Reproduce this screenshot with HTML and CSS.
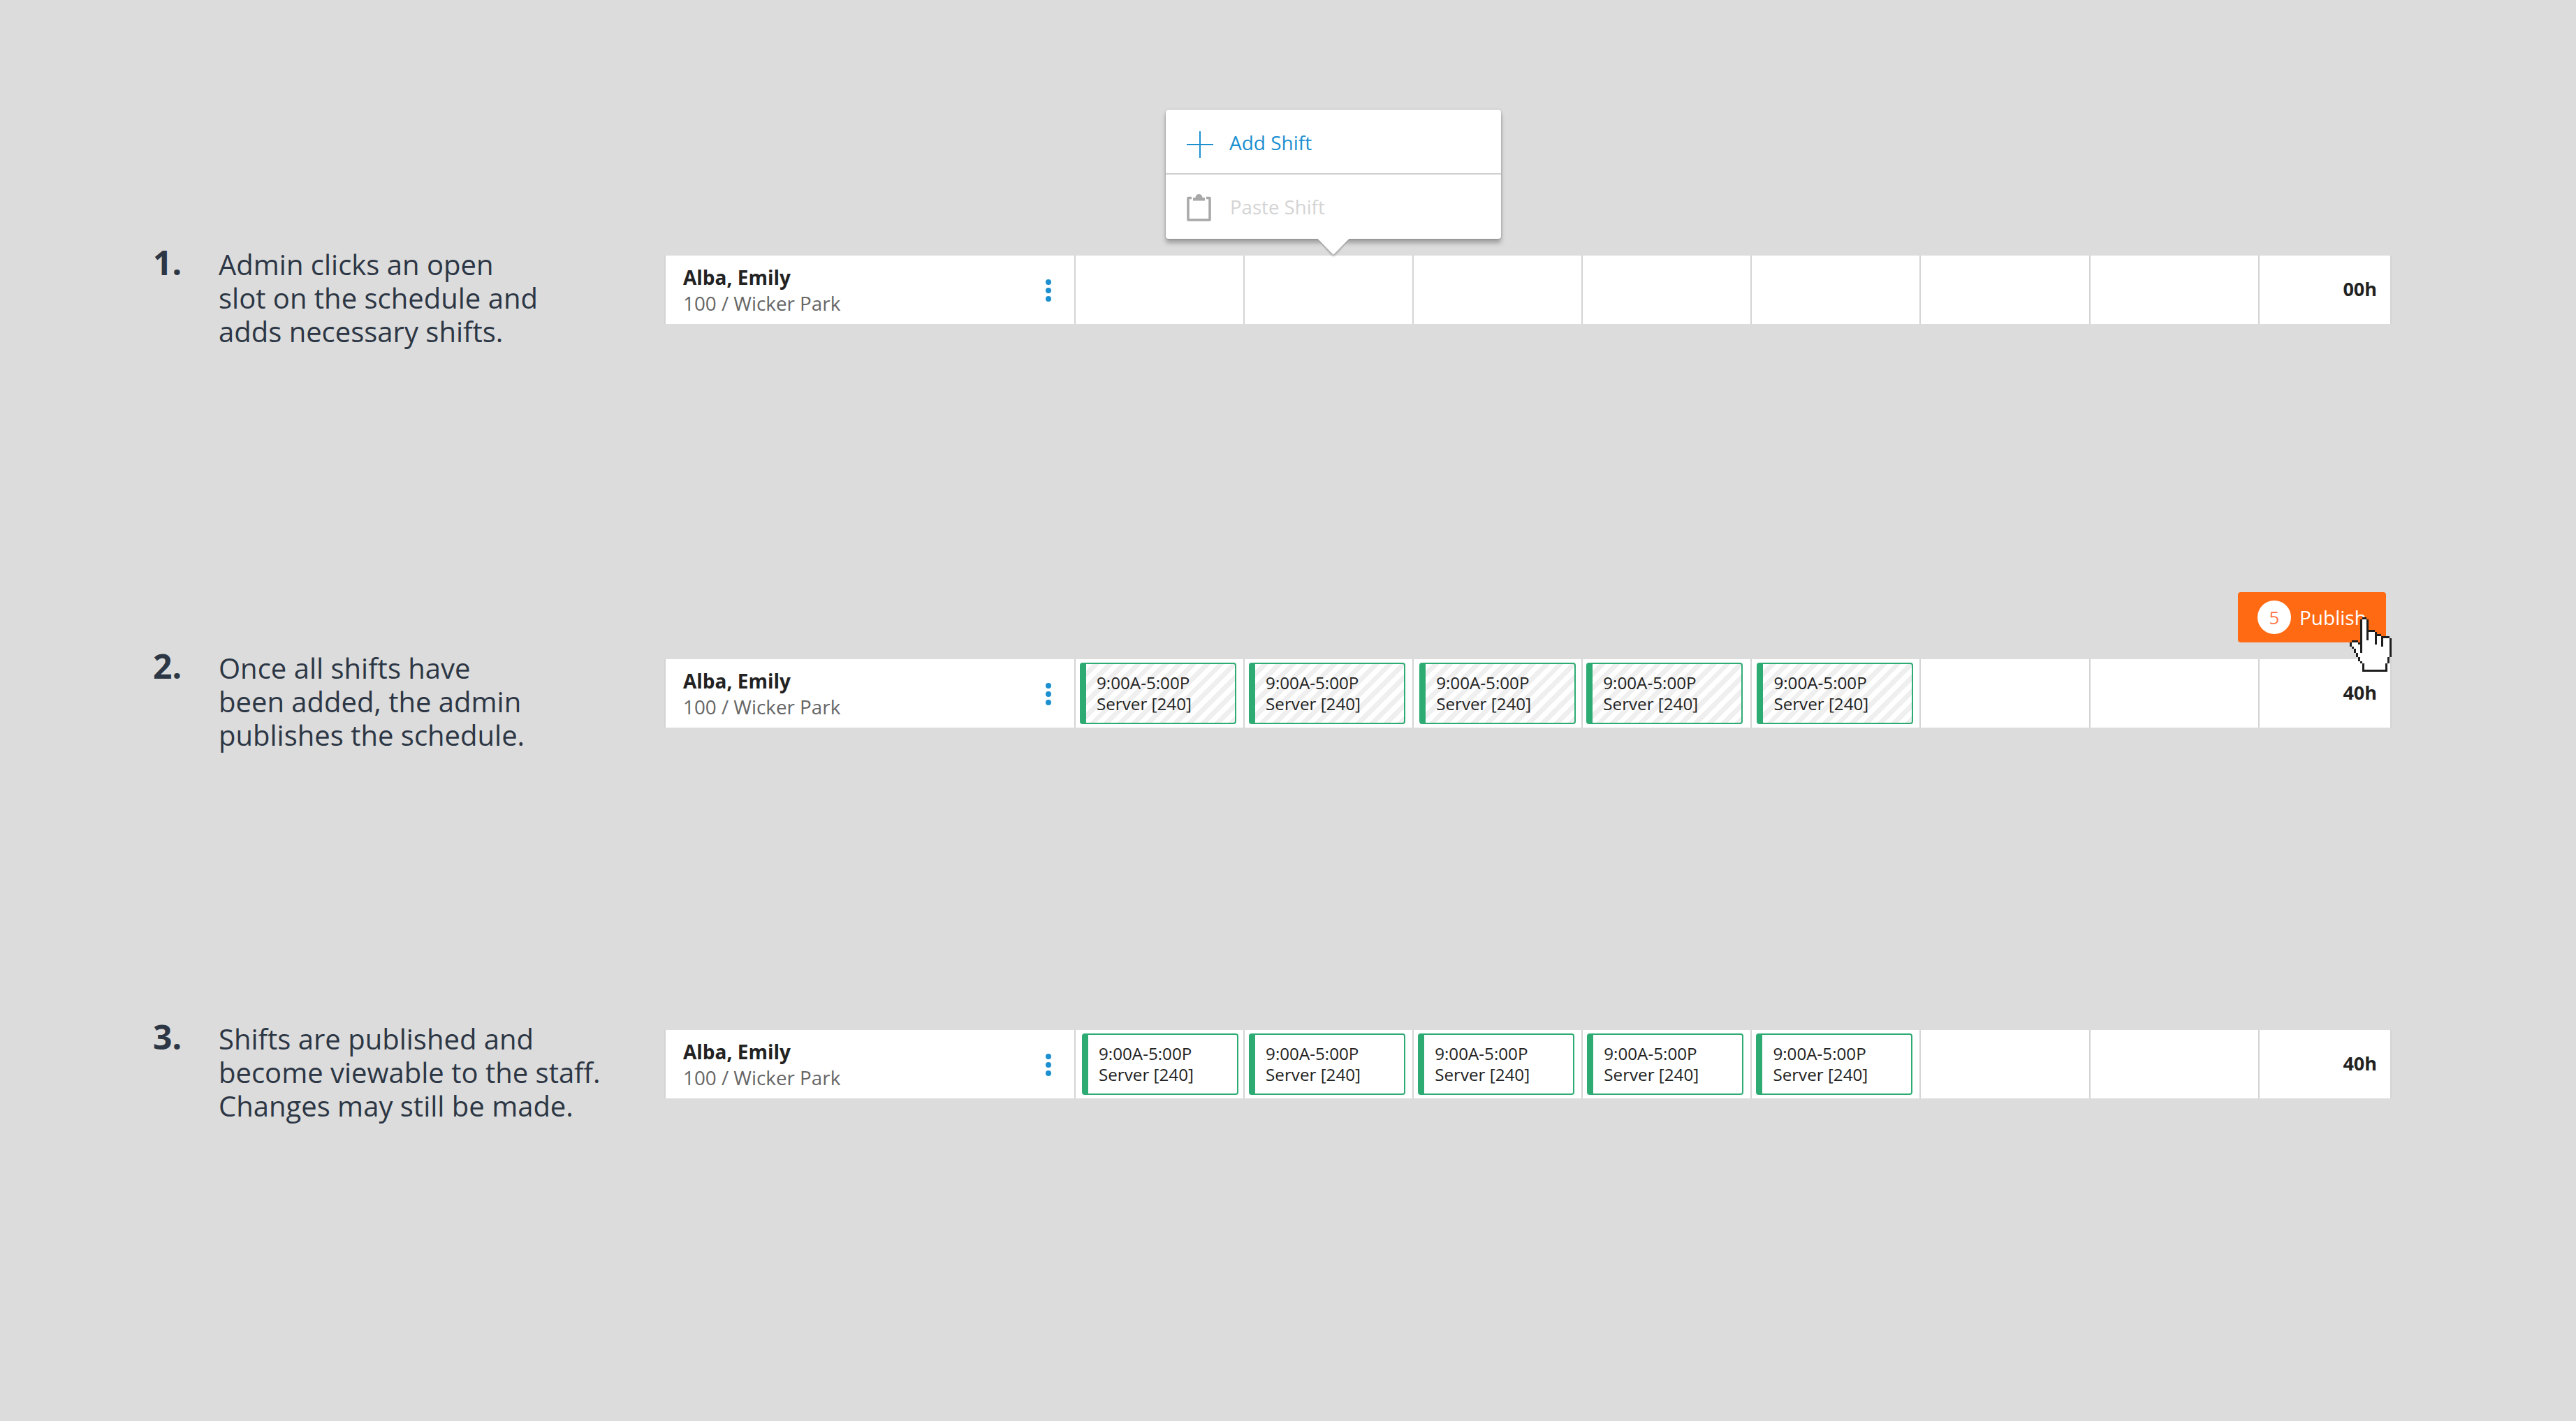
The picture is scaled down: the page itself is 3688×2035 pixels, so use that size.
FILE: index.html
```html
<!DOCTYPE html>
<html lang="en">
<head>
    <meta charset="UTF-8">
    <title>Publishing a schedule</title>
    <link rel="stylesheet" href="styles.css">
</head>
<body>
    <div class="page">
        <div class="step">
            <div class="step-num">1.</div>
            <div class="step-text">Admin clicks an open<br>slot on the schedule and<br>adds necessary shifts.</div>
            <div class="row">
                <div class="name-cell">
                    <div>
                        <div class="name">Alba, Emily</div>
                        <div class="sub">100 / Wicker Park</div>
                    </div>
                    <div class="dots"><span></span><span></span><span></span></div>
                </div>
                <div class="cell"></div>
                <div class="cell"></div>
                <div class="cell"></div>
                <div class="cell"></div>
                <div class="cell"></div>
                <div class="cell"></div>
                <div class="cell"></div>
                <div class="hours">00h</div>
                <div class="popover">
                    <div class="pop-item add">
                        <svg class="pop-plus" viewBox="0 0 38 38"><path d="M19 0V38M0 19H38" fill="none" stroke="#1b8fd0" stroke-width="2"/></svg>
                        <span>Add Shift</span>
                    </div>
                    <div class="pop-item paste">
                        <svg class="pop-clip" viewBox="0 0 35 42"><path d="M7 8.5H2V40H33V8.5H28" fill="none" stroke="#a8a8a8" stroke-width="3.5" stroke-linejoin="round"/><path d="M9 12.5V8H12.5A5 5 0 0 1 22.5 8H26V12.5Z" fill="#a8a8a8"/></svg>
                        <span>Paste Shift</span>
                    </div>
                </div>
            </div>
        </div>

        <div class="step step-two">
            <div class="step-num">2.</div>
            <div class="step-text">Once all shifts have<br>been added, the admin<br>publishes the schedule.</div>
            <div class="row row-draft">
                <div class="name-cell">
                    <div>
                        <div class="name">Alba, Emily</div>
                        <div class="sub">100 / Wicker Park</div>
                    </div>
                    <div class="dots"><span></span><span></span><span></span></div>
                </div>
                <div class="cell"><div class="shift draft">9:00A-5:00P<br>Server [240]</div></div>
                <div class="cell"><div class="shift draft">9:00A-5:00P<br>Server [240]</div></div>
                <div class="cell"><div class="shift draft">9:00A-5:00P<br>Server [240]</div></div>
                <div class="cell"><div class="shift draft">9:00A-5:00P<br>Server [240]</div></div>
                <div class="cell"><div class="shift draft">9:00A-5:00P<br>Server [240]</div></div>
                <div class="cell"></div>
                <div class="cell"></div>
                <div class="hours">40h</div>
                <div class="publish">
                    <span class="count">5</span>
                    <span>Publish</span>
                    <svg class="hand" viewBox="0 0 20 26" shape-rendering="crispEdges">
                        <path d="M6 0H8V1H9V6H12V7H13V8H15V9H19V10H20V19H19V22H18V26H6V22H5V21H4V19H3V17H2V15H1V14H0V12H1V11H4V12H5V1H6Z" fill="#fff"/>
                        <path d="M5 1h1v16h-1zM6 0h2v1h-2zM8 1h1v10h-1zM9 6h3v1h-3zM12 7h1v6h-1zM13 8h2v1h-2zM15 9h1v5h-1zM16 9h3v1h-3zM19 10h1v9h-1zM18 19h1v3h-1zM17 22h1v4h-1zM6 25h11v1h-11zM6 22h1v3h-1zM5 21h1v1h-1zM4 19h1v2h-1zM3 17h1v2h-1zM2 15h1v2h-1zM1 14h1v1h-1zM0 12h1v2h-1zM1 11h3v1h-3zM4 12h1v1h-1z" fill="#1e1e1e"/>
                    </svg>
                </div>
            </div>
        </div>

        <div class="step step-three">
            <div class="step-num">3.</div>
            <div class="step-text">Shifts are published and<br>become viewable to the staff.<br>Changes may still be made.</div>
            <div class="row row-live">
                <div class="name-cell">
                    <div>
                        <div class="name">Alba, Emily</div>
                        <div class="sub">100 / Wicker Park</div>
                    </div>
                    <div class="dots"><span></span><span></span><span></span></div>
                </div>
                <div class="cell"><div class="shift">9:00A-5:00P<br>Server [240]</div></div>
                <div class="cell"><div class="shift">9:00A-5:00P<br>Server [240]</div></div>
                <div class="cell"><div class="shift">9:00A-5:00P<br>Server [240]</div></div>
                <div class="cell"><div class="shift">9:00A-5:00P<br>Server [240]</div></div>
                <div class="cell"><div class="shift">9:00A-5:00P<br>Server [240]</div></div>
                <div class="cell"></div>
                <div class="cell"></div>
                <div class="hours">40h</div>
            </div>
        </div>
    </div>
</body>
</html>
```

FILE: styles.css
```css
body {
    margin: 0;
    background: #dcdcdc;
    font-family: 'Open Sans', sans-serif;
    color: #222;
}
.page {
    min-height: 2035px;
    box-sizing: border-box;
    padding: 366px 0 0 219px;
}
.step {
    display: flex;
    height: 98px;
}
.step-two {
    margin-top: 480px;
}
.step-three {
    margin-top: 433px;
}
.step-num {
    width: 94px;
    margin-top: -14px;
    font-size: 48px;
    line-height: 48px;
    font-weight: 700;
    color: #2c3644;
}
.step-text {
    width: 638px;
    margin-top: -11px;
    font-size: 40px;
    line-height: 48px;
    color: #2c3644;
    white-space: nowrap;
}
.row {
    position: relative;
    width: 2473px;
    display: grid;
    grid-template-columns: 587px repeat(7, 242.1px) 1fr;
    background: #fff;
    box-sizing: border-box;
    border-right: 2px solid #d4d4d4;
}
.name-cell {
    display: flex;
    justify-content: space-between;
    align-items: center;
    padding: 0 33px 0 25px;
    border-left: 2px solid #d4d4d4;
}
.name {
    font-size: 28px;
    line-height: 38px;
    font-weight: 700;
}
.sub {
    margin-top: -1px;
    font-size: 27.8px;
    line-height: 38px;
    color: #666;
}
.dots {
    display: flex;
    flex-direction: column;
    gap: 4px;
    margin-top: 2px;
}
.dots span {
    width: 8px;
    height: 8px;
    border-radius: 50%;
    background: #1b8fd0;
}
.cell {
    display: flex;
    align-items: center;
    border-left: 2px solid #d4d4d4;
}
.hours {
    border-left: 2px solid #d4d4d4;
    padding-right: 19px;
    text-align: right;
    font-size: 27px;
    line-height: 96px;
    font-weight: 700;
}
.shift {
    width: 224px;
    height: 88px;
    margin-left: 6px;
    box-sizing: border-box;
    padding: 12px 0 0 15px;
    border: 2px solid #2eab73;
    border-left-width: 9px;
    border-radius: 4px;
    background: #fff;
    font-size: 24.2px;
    line-height: 30px;
}
.draft {
    background: repeating-linear-gradient(135deg, #fff 0 7px, #efefef 7px 14px);
}
.row-draft .cell:nth-child(4) .shift {
    margin-left: 8px;
}
.row-draft .cell:nth-child(5) .shift {
    margin-left: 5px;
}
.row-draft .cell:nth-child(6) .shift {
    margin-left: 7px;
}
.row-live .cell:nth-child(2) .shift {
    margin-left: 9px;
}
.popover {
    position: absolute;
    left: 718px;
    top: -209px;
    width: 480px;
    height: 185px;
    background: #fff;
    border-radius: 4px;
    box-shadow: 0 0 3px rgba(0, 0, 0, 0.22), 0 6px 6px rgba(0, 0, 0, 0.28);
}
.popover::after {
    content: "";
    position: absolute;
    left: 224px;
    top: 169px;
    width: 32px;
    height: 32px;
    background: #fff;
    transform: rotate(45deg);
    box-shadow: 2px 2px 3px rgba(0, 0, 0, 0.25);
    clip-path: polygon(100% 0, 120% 120%, 0 100%);
}
.pop-item {
    display: flex;
    align-items: center;
    box-sizing: border-box;
    font-size: 28px;
}
.add {
    height: 93px;
    color: #1b8fd0;
    border-bottom: 2px solid #d0d0d0;
    padding: 2px 0 0 30px;
    gap: 23px;
}
.paste {
    height: 92px;
    color: #d4d4d4;
    padding-left: 30px;
    gap: 27px;
    font-size: 27.6px;
}
.pop-plus {
    width: 38px;
    height: 38px;
    margin-top: 6px;
}
.pop-clip {
    width: 35px;
    height: 42px;
}
.publish {
    position: absolute;
    right: 6px;
    top: -96px;
    width: 212px;
    height: 72px;
    display: flex;
    align-items: center;
    gap: 12px;
    box-sizing: border-box;
    padding-left: 28px;
    background: #ff6a13;
    border-radius: 4px;
    color: #fff;
    font-size: 28px;
}
.count {
    width: 48px;
    height: 48px;
    border-radius: 50%;
    background: #fff;
    color: #ff7a50;
    font-size: 26px;
    line-height: 48px;
    text-align: center;
}
.hand {
    position: absolute;
    left: 160px;
    top: 36px;
    width: 60px;
    height: 78px;
}
```
